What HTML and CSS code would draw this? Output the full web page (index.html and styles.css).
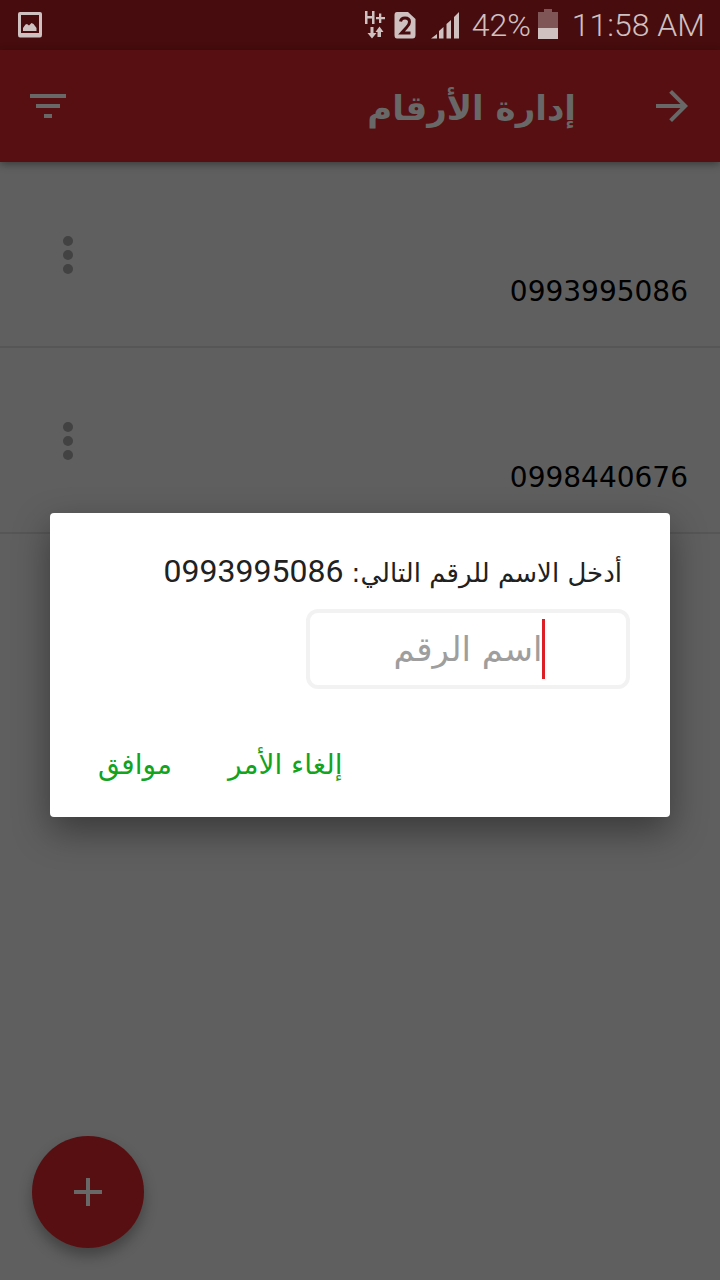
FILE: index.html
```html
<!DOCTYPE html>
<html lang="ar" dir="rtl">
<head>
<meta charset="utf-8">
<meta name="viewport" content="width=device-width, initial-scale=1">
<title>إدارة الأرقام</title>
<link rel="stylesheet" href="styles.css">
</head>
<body>
<div class="screen">
  <div class="status" dir="ltr">
    <svg class="status-picture" width="24" height="26" viewBox="0 0 24 26" aria-hidden="true">
      <path fill-rule="evenodd" d="M2 0H22Q24 0 24 2V23Q24 25.500 22 25.500H2Q0 25.500 0 23V2Q0 0 2 0ZM3 3V21H21V3Z"/>
      <path d="M5 19V16L7.500 12.500L9 12L11 13.500L13.500 11L15.500 12L18.500 16V19Z"/>
    </svg>
    <svg width="22" height="28" viewBox="0 0 22 28" aria-hidden="true">
      <path d="M1 0H3.500V5H8V0H10.500V13H8V7.500H3.500V13H1ZM15 2.500H17.300V6H21V8.200H17.300V12H15V8.200H12V6H15Z"/>
      <path d="M6.500 16H9.500V22H12.500L8 27.500L3.500 22H6.500ZM13.500 26V21H11.500L15.500 15.500L19.500 21H17V26Z"/>
    </svg>
    <svg class="status-sim" width="22" height="28" viewBox="0 0 22 28" aria-hidden="true">
      <path d="M3 1H14L21.500 8V24Q21.500 27.500 18.500 27.500H3Q0.500 27.500 0.500 24V4Q0.500 1 3 1Z"/>
      <path class="cut" d="M6.500 10.500Q7 7 11 7Q15.500 7 15.500 11Q15.500 13.500 12.500 16.500L7.500 22H16.500"/>
    </svg>
    <svg class="status-signal" width="28" height="28" viewBox="0 0 28 28" aria-hidden="true">
      <path d="M0 27.500L6 23V27.500ZM8 27.500V20L12.500 16V27.500ZM15.500 27.500V13L20 9V27.500ZM23 27.500V6L28 1V27.500Z"/>
    </svg>
    <span class="status-percent">42%</span>
    <svg class="status-battery" width="20" height="30" viewBox="0 0 20 30" aria-hidden="true">
      <path class="dim" d="M0 3H6V0H14V3H20V19H0Z"/>
      <path d="M0 19H20V30H0Z"/>
    </svg>
    <time>11:58 AM</time>
  </div>

  <header class="bar">
    <button class="icon-button" type="button" aria-label="رجوع">
      <svg width="48" height="48" viewBox="0 0 24 24" aria-hidden="true"><path d="M12 4L10.600 5.400L16.200 11H4V13H16.200L10.600 18.600L12 20L20 12Z"/></svg>
    </button>
    <h1>إدارة الأرقام</h1>
    <button class="icon-button" type="button" aria-label="تصفية">
      <svg width="48" height="48" viewBox="0 0 24 24" aria-hidden="true"><path d="M3 6H21V8H3ZM6 11H18V13H6ZM10 16H14V18H10Z"/></svg>
    </button>
  </header>

  <main>
    <ul class="numbers">
      <li>
        <span>0993995086</span>
        <button class="more" type="button" aria-label="خيارات"><svg width="10" height="40" viewBox="0 0 10 40" aria-hidden="true"><circle cx="5" cy="6" r="5"/><circle cx="5" cy="20" r="5"/><circle cx="5" cy="34" r="5"/></svg></button>
      </li>
      <li>
        <span>0998440676</span>
        <button class="more" type="button" aria-label="خيارات"><svg width="10" height="40" viewBox="0 0 10 40" aria-hidden="true"><circle cx="5" cy="6" r="5"/><circle cx="5" cy="20" r="5"/><circle cx="5" cy="34" r="5"/></svg></button>
      </li>
    </ul>
  </main>

  <button class="add" type="button" aria-label="إضافة رقم">
    <svg width="28" height="28" viewBox="0 0 28 28" aria-hidden="true"><path d="M12 0H16V12H28V16H16V28H12V16H0V12H12Z"/></svg>
  </button>

  <div class="overlay">
    <form class="dialog" role="dialog" aria-labelledby="prompt">
      <label id="prompt" class="prompt" for="name">أدخل الاسم للرقم التالي: <span class="prompt-number">0993995086</span></label>
      <div class="field">
        <input id="name" type="text" placeholder="اسم الرقم">
        <span class="caret"></span>
      </div>
      <div class="actions">
        <button type="button">إلغاء الأمر</button>
        <button type="submit">موافق</button>
      </div>
    </form>
  </div>
</div>
</body>
</html>
```
FILE: styles.css
```css
* {
  box-sizing: border-box;
}

body {
  margin: 0;
  background: #5f5f5f;
  font-family: "DejaVu Sans", sans-serif;
}

button {
  margin: 0;
  padding: 0;
  border: 0;
  background: none;
  color: inherit;
  font: inherit;
}

svg {
  display: block;
  flex: none;
  fill: currentColor;
}

.screen {
  position: relative;
  display: flex;
  flex-direction: column;
  min-height: 100vh;
}

.status {
  display: flex;
  align-items: center;
  height: 50px;
  padding: 0 15px 0 18px;
  background: #470c0d;
  color: #d0c1c1;
  font: 300 32px/50px Roboto, sans-serif;
  white-space: nowrap;
}

.status-picture {
  margin-right: auto;
}

.status-sim {
  margin-left: 8px;
}

.status-sim .cut {
  fill: none;
  stroke: #470c0d;
  stroke-width: 3;
}

.status-signal {
  margin-left: 15px;
}

.status-percent {
  margin-left: 13px;
}

.status-battery {
  margin: 0 14px 2px 7px;
}

.status-battery .dim {
  fill: #805556;
}

.bar {
  display: flex;
  align-items: center;
  height: 112px;
  padding: 0 24px;
  background: #580f11;
  box-shadow: 0 2px 8px rgba(0, 0, 0, 0.4);
  color: #686868;
}

.bar h1 {
  flex: 1;
  margin: 0;
  padding: 4px 72px 0 0;
  font-size: 34px;
  line-height: 56px;
  font-weight: 700;
}

.numbers {
  margin: 0;
  padding: 0;
  list-style: none;
}

.numbers li {
  display: flex;
  align-items: center;
  justify-content: space-between;
  height: 186px;
  padding: 2px 32px 0 48px;
  border-bottom: 2px solid #565656;
  color: #000;
  font-size: 28px;
  line-height: 40px;
}

.numbers span {
  padding-top: 74px;
}

.more {
  display: flex;
  justify-content: center;
  width: 40px;
  color: #424242;
}

.add {
  position: absolute;
  left: 32px;
  bottom: 32px;
  display: grid;
  place-items: center;
  width: 112px;
  height: 112px;
  border-radius: 50%;
  background: #580f11;
  box-shadow: 0 8px 14px rgba(0, 0, 0, 0.3);
  color: #686868;
}

.overlay {
  position: absolute;
  inset: 50px 0 0;
  display: grid;
  align-items: center;
  padding: 0 50px;
}

.dialog {
  padding: 32px 40px 24px;
  border-radius: 4px;
  background: #fff;
  box-shadow: 0 14px 36px rgba(0, 0, 0, 0.4);
}

.prompt {
  display: block;
  padding-right: 8px;
  color: #212121;
  font-size: 26px;
  line-height: 56px;
}

.prompt-number {
  font-family: Roboto, sans-serif;
  font-size: 32px;
  line-height: 32px;
}

.field {
  position: relative;
  width: 60%;
  margin-top: 8px;
}

.field input {
  display: block;
  width: 100%;
  height: 80px;
  border: 4px solid #f2f2f2;
  border-radius: 12px;
  background: #fff;
  color: #212121;
  font: 34px "DejaVu Sans", sans-serif;
  text-align: center;
  outline: 0;
}

.field input::placeholder {
  color: #9e9e9e;
  opacity: 1;
}

.caret {
  position: absolute;
  top: 10px;
  right: 85px;
  width: 3px;
  height: 60px;
  background: #dc1f26;
}

.actions {
  display: flex;
  justify-content: flex-end;
  gap: 56px;
  padding: 48px 0 0 8px;
  color: #13a31f;
  font-size: 28px;
  line-height: 56px;
}
```
